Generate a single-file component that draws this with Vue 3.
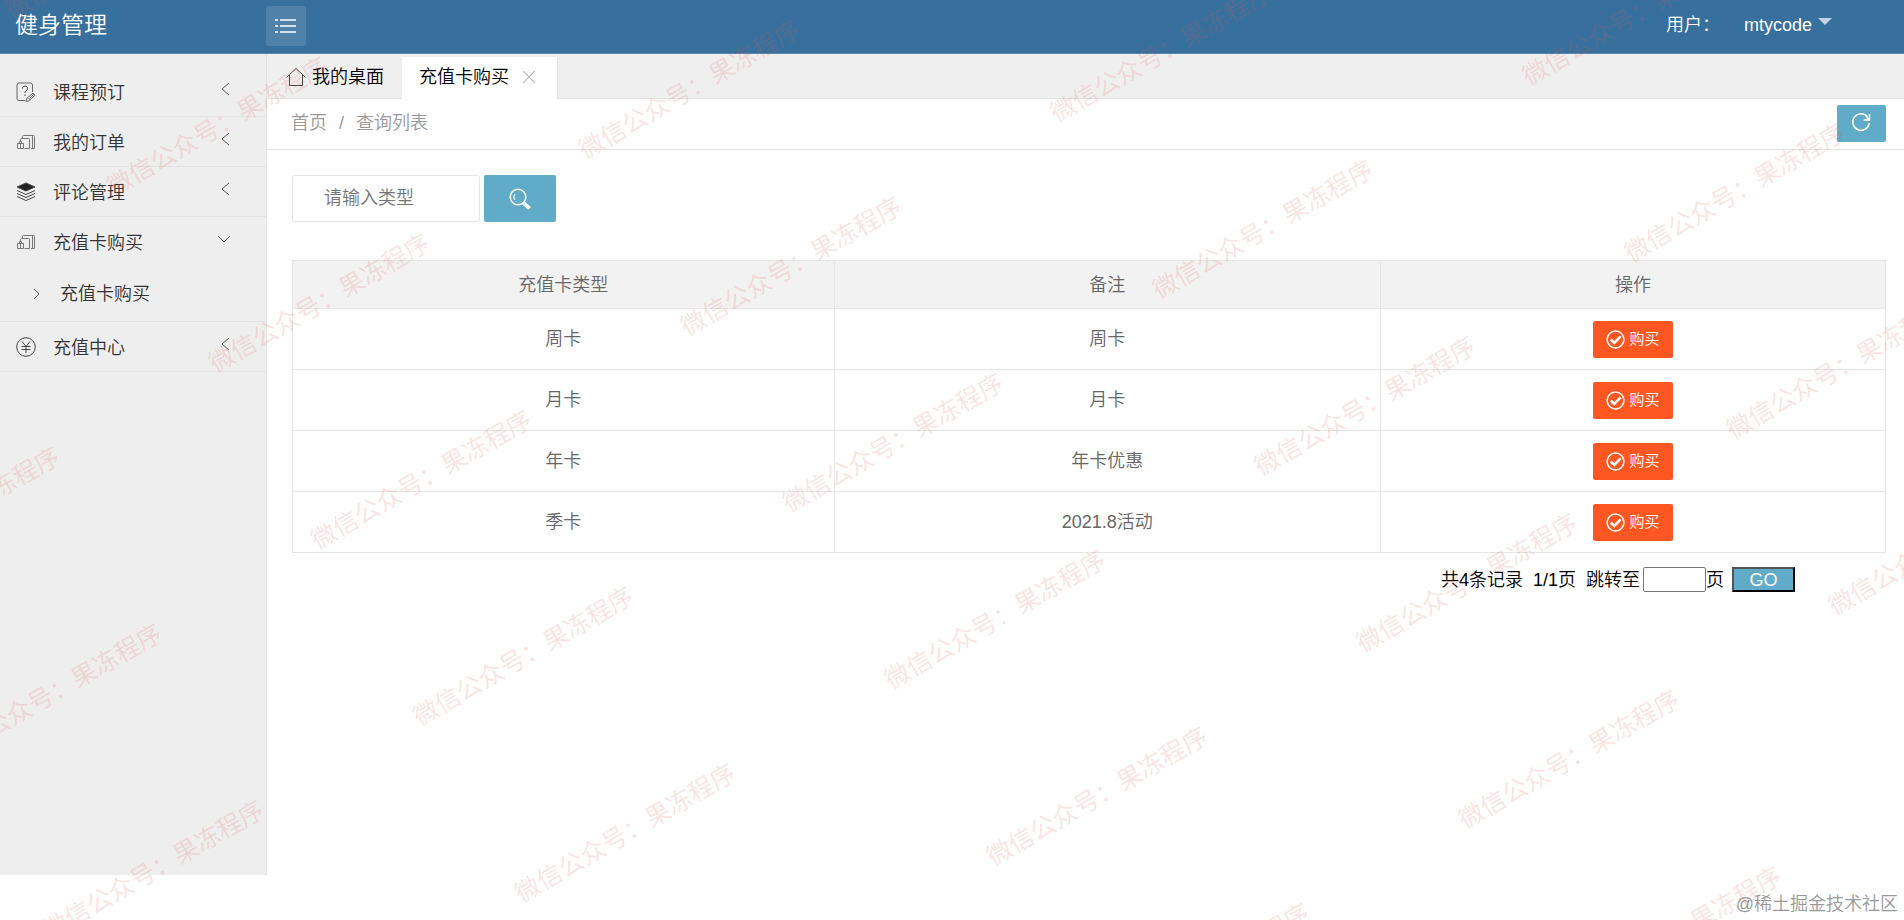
<template>
  <div class="layout">
    <header class="top-bar">
      <a href="#" class="logo">健身管理</a>
      <button type="button" class="menu-toggle" aria-label="菜单" @click="collapsed = !collapsed">
        <svg width="22" height="16" viewBox="0 0 22 16" fill="none" stroke="#fff" stroke-width="1.600">
          <path d="M0 2h3M5 2h16M0 8h3M5 8h16M0 14h3M5 14h16" />
        </svg>
      </button>
      <div class="user">
        <span>用户：</span>
        <button type="button" class="user-name">
          mtycode
          <i class="caret"></i>
        </button>
      </div>
    </header>

    <div class="body">
      <nav v-show="!collapsed" class="sidebar">
        <div v-for="item in menus" :key="item.id" class="menu-group">
          <button type="button" class="menu-item" @click="toggleMenu(item)">
            <svg v-if="item.icon === 'survey'" class="menu-icon" viewBox="0 0 20 20" fill="none" stroke="#666">
              <path d="M9 18.500H3a2 2 0 0 1-2-2V3a2 2 0 0 1 2-2h11.500a2 2 0 0 1 2 2v7" />
              <path d="M6.500 6.500c0-3.300 5-3.200 5 0 0 2-2.500 2-2.500 4.300M9 12.500v1.400" stroke="#333" />
              <path d="M10 19.500l.7-3 6.300-5.500 2 2.200-6.200 5.600zM12.300 16l1.800 2M14 15.800l3.500-3.300" />
            </svg>
            <svg v-else-if="item.icon === 'cards'" class="menu-icon" viewBox="0 0 20 20" fill="none" stroke="#777">
              <path d="M6.500 6.500v-2a1 1 0 0 1 1-1h10a1 1 0 0 1 1 1v12h-3.500M16.500 4v12" />
              <path d="M4.500 9.500v-2a1 1 0 0 1 1-1h7a1 1 0 0 1 1 1v9h-5" />
              <path d="M1.500 11.500h6v5h-6zM3.500 11.500v-2h2v2M4.500 12v4" />
            </svg>
            <svg v-else-if="item.icon === 'layers'" class="menu-icon" viewBox="0 0 20 20" fill="none" stroke="#444">
              <path d="M10 1l9 4-9 4-9-4z" fill="#222" />
              <path d="M1 8.500l9 4 9-4M1 11.500l9 4 9-4M1 14.500l9 4 9-4" />
            </svg>
            <svg v-else class="menu-icon" viewBox="0 0 20 20" fill="none" stroke="#444">
              <circle cx="10" cy="10" r="9.300" />
              <path d="M6 4.500l4 5 4-5M10 9.500V16M5.500 9.500h9M5.500 12.500h9" />
            </svg>
            <span class="menu-text">{{ item.title }}</span>
            <svg class="menu-arrow" width="14" height="14" viewBox="0 0 14 14" fill="none" stroke="#555">
              <path :d="item.open ? 'M1 4l6 6 6-6' : 'M12 1L5 7l7 6'" />
            </svg>
          </button>
          <div v-if="item.open && item.children.length" class="sub-menu">
            <a v-for="child in item.children" :key="child" href="#" class="sub-item">
              <svg width="8" height="12" viewBox="0 0 8 12" fill="none" stroke="#555">
                <path d="M1 1l5 5-5 5" />
              </svg>
              <span>{{ child }}</span>
            </a>
          </div>
        </div>
      </nav>

      <main class="main">
        <div class="tabs">
          <button type="button" class="tab">
            <svg width="20" height="20" viewBox="0 0 20 20" fill="none" stroke="#444">
              <path d="M.5 10.500L10 1.500l9.500 9M3.500 8v10.500h13V8" />
            </svg>
            我的桌面
          </button>
          <div class="tab active">
            <span>充值卡购买</span>
            <button type="button" class="tab-close" aria-label="关闭">
              <svg width="12" height="12" viewBox="0 0 12 12" fill="none" stroke="#bbb" stroke-width="1.200">
                <path d="M0 0l12 12M12 0L0 12" />
              </svg>
            </button>
          </div>
        </div>

        <div class="crumb-bar">
          <div class="crumbs">
            <a href="#">首页</a>
            <span>/</span>
            <a href="#">查询列表</a>
          </div>
          <button type="button" class="btn btn-refresh" aria-label="刷新">
            <svg width="20" height="20" viewBox="0 0 20 20" fill="none" stroke="#fff" stroke-width="1.600">
              <path d="M15.500 3.800A8.300 8.300 0 1 0 17.300 10M17.500 1v6h-6M17.500 7l-3-3" />
            </svg>
          </button>
        </div>

        <div class="content">
          <form class="search" @submit.prevent="search">
            <input v-model="keyword" type="text" class="search-input" placeholder="请输入类型" aria-label="请输入类型" />
            <button type="submit" class="btn btn-search" aria-label="查询">
              <svg width="22" height="22" viewBox="0 0 22 22" fill="none" stroke="#fff">
                <circle cx="9" cy="9" r="7.800" stroke-width="1.500" />
                <path d="M6 12A5 5 0 0 1 6 6" stroke-width="1.200" />
                <path d="M14 16l1.700-1.700 5.300 4.700-1.900 2zM16 16l4 4" stroke-width="1.200" />
              </svg>
            </button>
          </form>

          <table class="card-table">
            <thead>
              <tr>
                <th class="col-type">充值卡类型</th>
                <th class="col-remark">备注</th>
                <th>操作</th>
              </tr>
            </thead>
            <tbody>
              <tr v-for="card in filteredCards" :key="card.type">
                <td>{{ card.type }}</td>
                <td>{{ card.remark }}</td>
                <td>
                  <button type="button" class="btn-buy">
                    <svg width="19" height="19" viewBox="0 0 18 18" fill="none" stroke="#fff">
                      <circle cx="9" cy="9" r="8" stroke-width="1.400" />
                      <path d="M4.500 9l3.300 3.200 6-6.200" stroke-width="2.400" />
                    </svg>
                    购买
                  </button>
                </td>
              </tr>
            </tbody>
          </table>

          <form class="pager" @submit.prevent>
            <span>共{{ cards.length }}条记录</span>
            <span>1/1页</span>
            <label class="pager-jump">
              跳转至
              <input v-model="page" type="text" class="pager-input" />页
            </label>
            <button type="submit" class="pager-go">GO</button>
          </form>
        </div>
      </main>
    </div>

    <footer class="footer">@稀土掘金技术社区</footer>

    <!-- 水印 -->
    <div class="watermark" aria-hidden="true">
      <div class="watermark-grid">
        <span v-for="n in 54" :key="n">微信公众号：果冻程序</span>
      </div>
    </div>
  </div>
</template>

<script setup>
import { ref, computed } from 'vue'

const collapsed = ref(false)
const keyword = ref('')
const appliedKeyword = ref('')
const page = ref('')

const menus = ref([
  { id: 1, title: '课程预订', icon: 'survey', open: false, children: [] },
  { id: 2, title: '我的订单', icon: 'cards', open: false, children: [] },
  { id: 3, title: '评论管理', icon: 'layers', open: false, children: [] },
  { id: 4, title: '充值卡购买', icon: 'cards', open: true, children: ['充值卡购买'] },
  { id: 5, title: '充值中心', icon: 'money', open: false, children: [] }
])

const cards = ref([
  { type: '周卡', remark: '周卡' },
  { type: '月卡', remark: '月卡' },
  { type: '年卡', remark: '年卡优惠' },
  { type: '季卡', remark: '2021.8活动' }
])

const filteredCards = computed(() =>
  cards.value.filter(card => card.type.includes(appliedKeyword.value))
)

const toggleMenu = (item) => {
  item.open = !item.open
}

const search = () => {
  appliedKeyword.value = keyword.value.trim()
}
</script>

<style>
body {
  background: #fff;
}
</style>

<style scoped>
.layout,
.layout * {
  box-sizing: border-box;
}

.layout {
  position: relative;
  display: flex;
  flex-direction: column;
  min-height: 100vh;
  font-family: "Liberation Sans", "Noto Sans CJK SC", sans-serif;
  font-size: 18px;
  font-weight: 350;
  line-height: 24px;
  color: #000;
}

button,
input {
  font: inherit;
  color: inherit;
}

button {
  padding: 0;
  border: none;
  background: none;
  cursor: pointer;
}

a {
  color: inherit;
  text-decoration: none;
}

svg {
  display: block;
  flex-shrink: 0;
}

.top-bar {
  display: flex;
  align-items: center;
  height: 54px;
  padding-right: 72px;
  padding-bottom: 2px;
  background: #38709d;
  border-bottom: 1px solid #5b86a8;
  color: #fff;
}

.logo {
  width: 266px;
  padding-left: 15px;
  padding-bottom: 2px;
  font-size: 23px;
  line-height: 48px;
}

.menu-toggle {
  display: flex;
  align-items: center;
  justify-content: center;
  width: 40px;
  height: 40px;
  border-radius: 4px;
  background: rgba(255, 255, 255, 0.12);
}

.user {
  display: flex;
  align-items: center;
  gap: 24px;
  margin-left: auto;
  padding-bottom: 2px;
}

.user-name {
  display: flex;
  align-items: center;
  gap: 6px;
}

.caret {
  border: 7px solid transparent;
  border-top-color: rgba(255, 255, 255, 0.7);
  border-bottom: none;
  margin-bottom: 6px;
}

.body {
  display: flex;
  flex: 1;
}

.sidebar {
  flex-shrink: 0;
  width: 267px;
  padding-top: 13px;
  background: #eee;
  border-right: 1px solid #e2e2e2;
}

.menu-group {
  border-bottom: 1px solid #e3e3e3;
}

.menu-item {
  display: flex;
  align-items: center;
  width: 100%;
  height: 49px;
  padding: 0 35px 0 16px;
  color: #333;
  text-align: left;
}

.menu-icon {
  width: 20px;
  height: 20px;
}

.menu-text {
  flex: 1;
  padding: 2px 0 0 17px;
}

.menu-arrow {
  margin-bottom: 6px;
}

.sub-item {
  display: flex;
  align-items: center;
  gap: 19px;
  height: 55px;
  padding-left: 33px;
  color: #333;
}

.main {
  flex: 1;
  min-width: 0;
}

.tabs {
  display: flex;
  height: 45px;
  padding-top: 3px;
  background: #efeff0;
  border-bottom: 1px solid #e2e2e2;
}

.tab {
  display: flex;
  align-items: center;
  gap: 6px;
  padding: 0 18px 2px 19px;
}

.tab.active {
  gap: 14px;
  height: 42px;
  padding: 0 22px 2px 17px;
  background: #fff;
  border-right: 1px solid #e2e2e2;
}

.crumb-bar {
  display: flex;
  align-items: center;
  justify-content: space-between;
  height: 51px;
  padding: 0 18px 2px 24px;
  border-bottom: 1px solid #e5e5e5;
}

.crumbs {
  display: flex;
  gap: 12px;
  color: #999;
}

.btn {
  display: flex;
  align-items: center;
  justify-content: center;
  border-radius: 2px;
  background: #5fabc8;
}

.btn-refresh {
  width: 49px;
  height: 37px;
}

.content {
  padding: 25px 18px 20px 25px;
}

.search {
  display: flex;
  gap: 4px;
  margin-bottom: 38px;
}

.search-input {
  width: 188px;
  height: 47px;
  padding: 0 10px 0 31px;
  border: 1px solid #e6e6e6;
  border-radius: 2px;
  background: #fff;
}

.search-input::placeholder {
  color: #757575;
}

.btn-search {
  width: 72px;
  height: 47px;
}

.card-table {
  width: 100%;
  table-layout: fixed;
  border-collapse: collapse;
  color: #666;
  text-align: center;
}

.card-table th,
.card-table td {
  height: 61px;
  padding: 0;
  border: 1px solid #e6e6e6;
  font-weight: 350;
}

.card-table th {
  height: 48px;
  background: #f2f2f2;
}

.col-type {
  width: 34%;
}

.col-remark {
  width: 34.3%;
}

.btn-buy {
  display: inline-flex;
  align-items: center;
  gap: 4px;
  height: 37px;
  padding: 0 13px;
  border-radius: 2px;
  background: #ff5722;
  color: #fff;
  font-size: 15px;
  vertical-align: middle;
}

.pager {
  display: flex;
  align-items: center;
  justify-content: flex-end;
  gap: 10px;
  padding: 14px 91px 0 0;
}

.pager-jump {
  display: flex;
  align-items: center;
}

.pager-input {
  width: 63px;
  height: 25px;
  margin-left: 3px;
  padding: 0 2px;
  border: 1px solid #767676;
  border-radius: 2px;
  background: #fff;
}

.pager-go {
  width: 63px;
  height: 25px;
  margin-left: -2px;
  border: 2px outset #000;
  background: #5fabc8;
  color: #fff;
  line-height: 20px;
}

.footer {
  display: flex;
  align-items: flex-end;
  justify-content: flex-end;
  height: 45px;
  padding: 0 6px 4px;
  color: #999;
}

.watermark {
  position: absolute;
  inset: 0;
  overflow: hidden;
  pointer-events: none;
}

.watermark-grid {
  position: absolute;
  top: 0;
  left: -854px;
  display: grid;
  grid-template-columns: repeat(6, 427px);
  grid-auto-rows: 204px;
  transform: rotate(-30deg);
  transform-origin: 854px 0;
  font-family: "Noto Sans CJK SC", sans-serif;
  font-size: 25px;
  font-weight: 400;
  line-height: 24px;
  color: rgba(225, 80, 80, 0.17);
}
</style>
